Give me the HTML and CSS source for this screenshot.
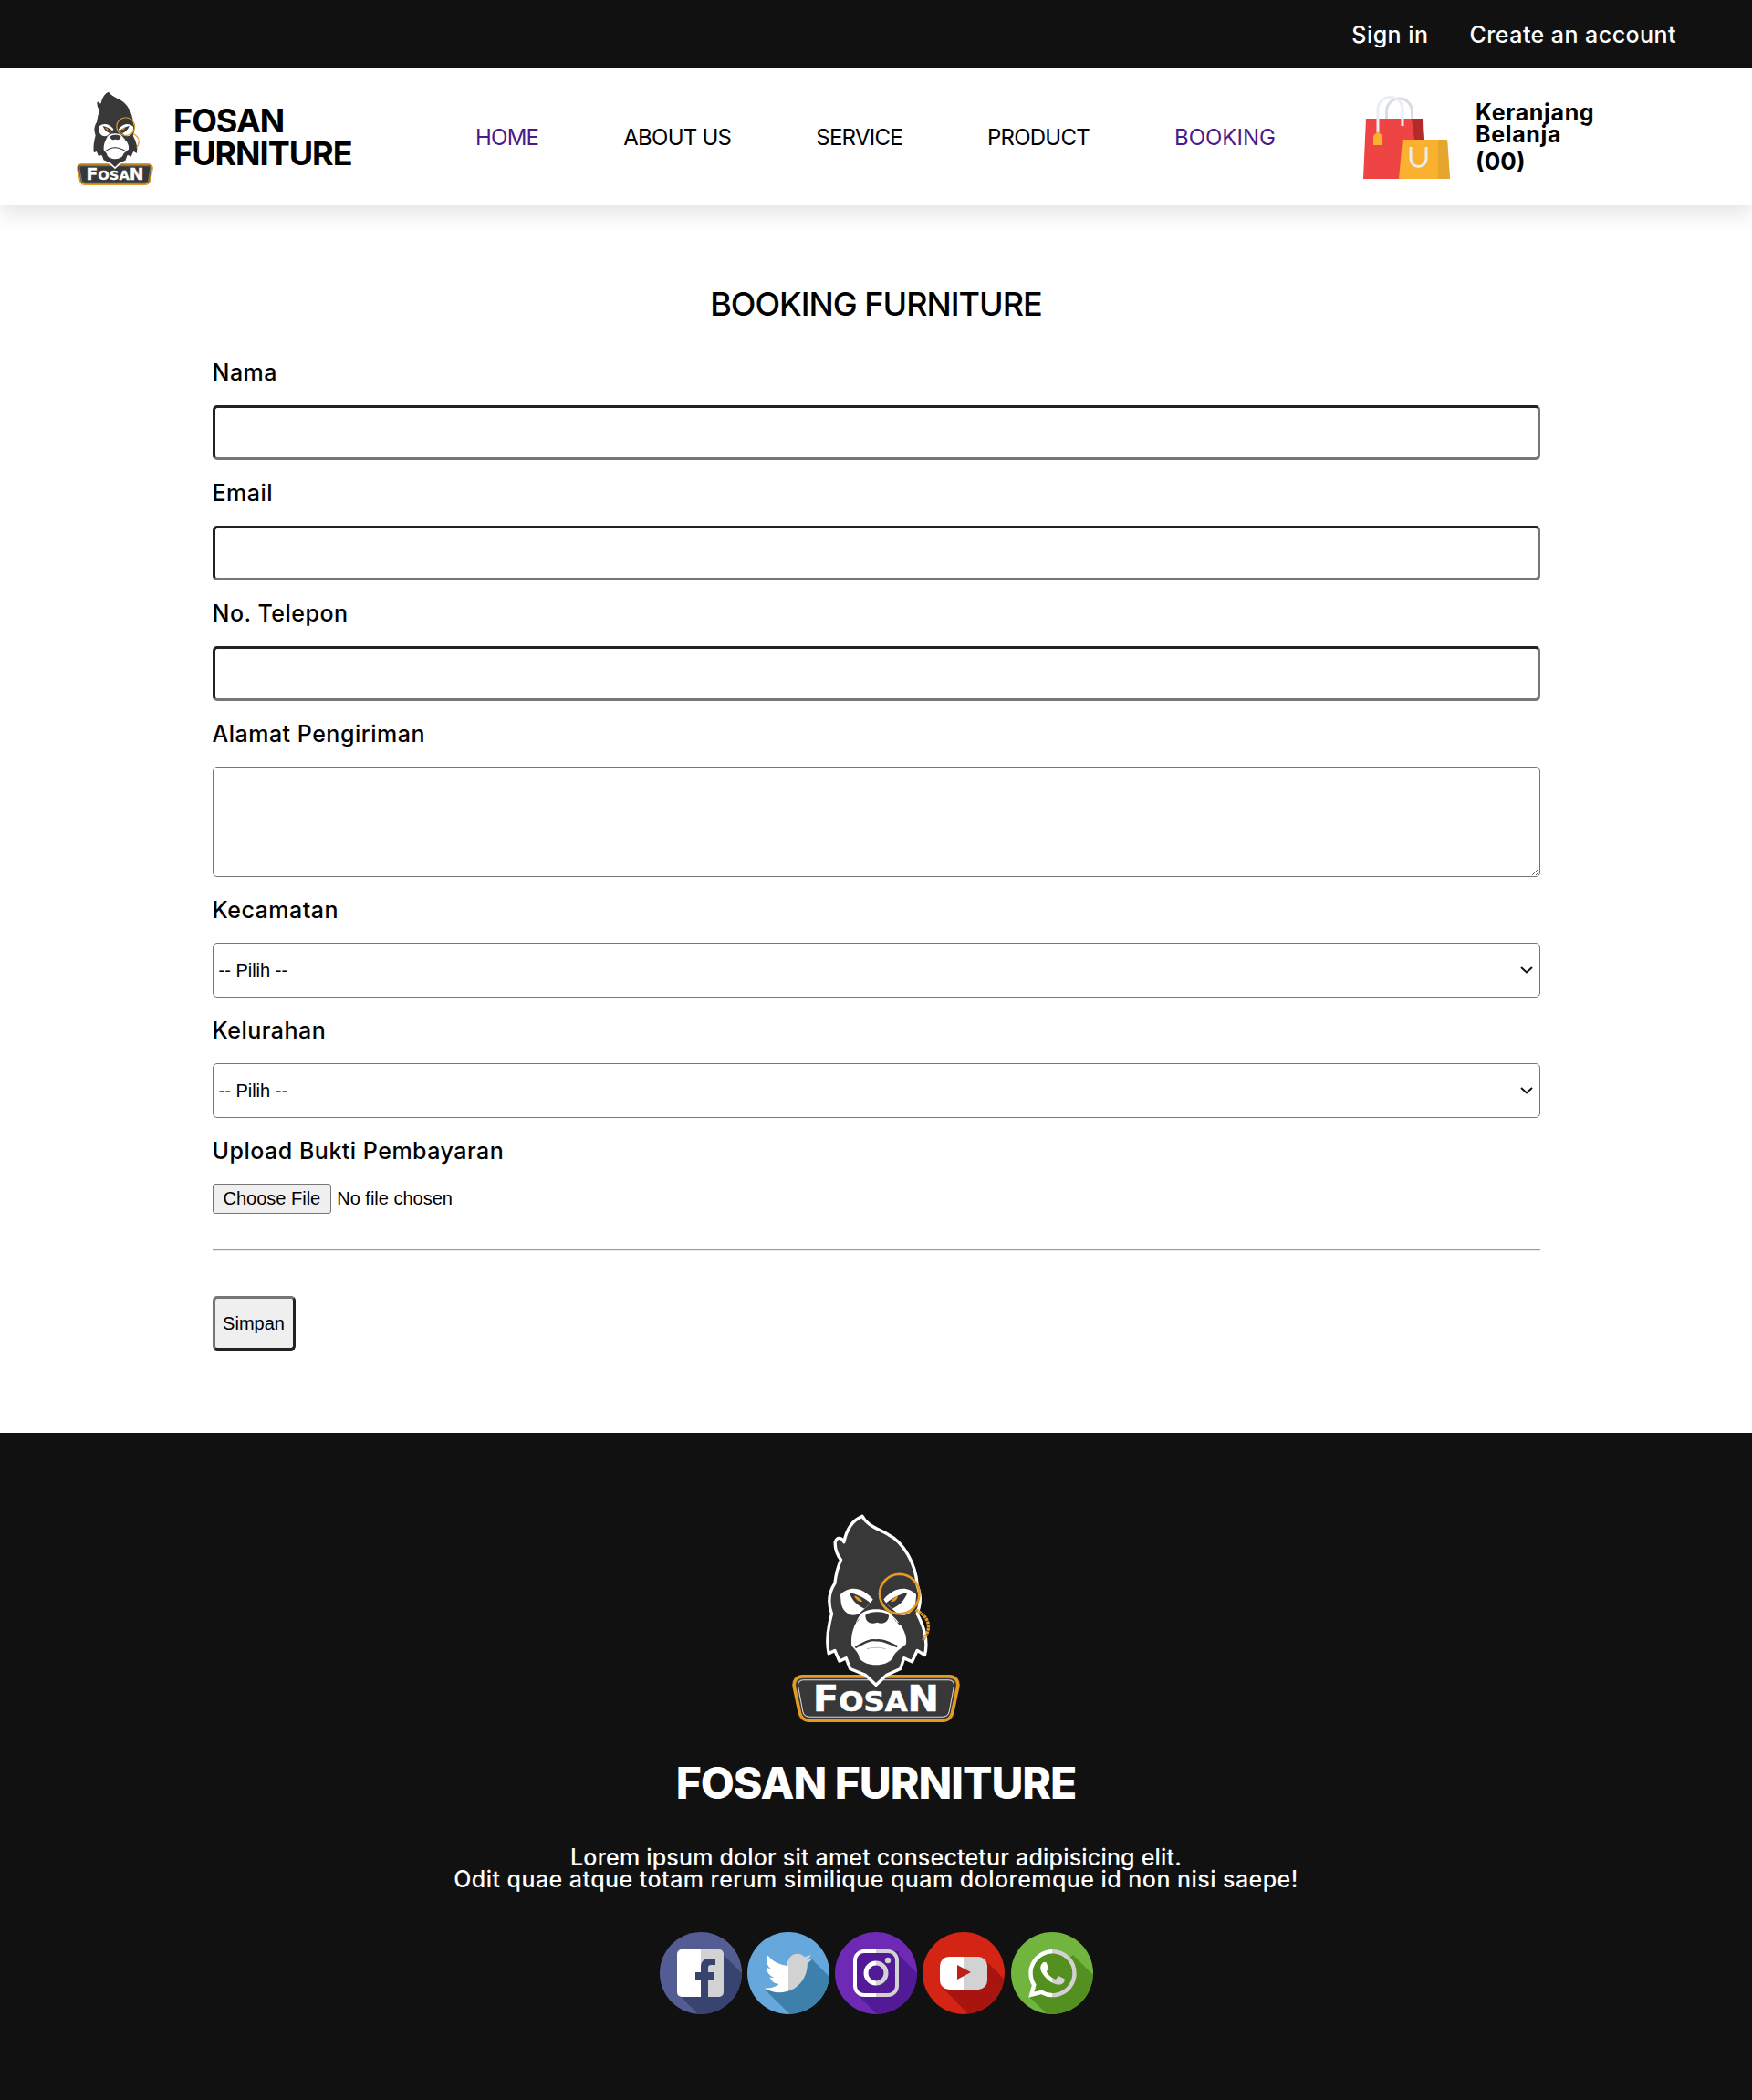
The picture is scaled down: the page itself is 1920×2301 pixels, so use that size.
FILE: index.html
```html
<!DOCTYPE html>
<html lang="id">
<head>
<meta charset="utf-8">
<title>Booking Furniture</title>
<link rel="stylesheet" href="styles.css">
</head>
<body>
<svg class="defs" width="0" height="0" aria-hidden="true">
  <defs>
    <linearGradient id="half" gradientUnits="userSpaceOnUse" x1="0" y1="0" x2="90" y2="0">
      <stop offset="0.5" stop-color="#fff"/><stop offset="0.5" stop-color="#d2d2d2"/>
    </linearGradient>
    <linearGradient id="halfBird" gradientUnits="userSpaceOnUse" x1="0" y1="0" x2="24" y2="0">
      <stop offset="0.5" stop-color="#fff"/><stop offset="0.5" stop-color="#d2d2d2"/>
    </linearGradient>
    <clipPath id="disc"><circle cx="45" cy="45" r="45"/></clipPath>
    <symbol id="gorilla" viewBox="85 55 550 685">
      <path d="M120 590H600C620 590 632 605 628 625L610 710C605 728 595 735 575 735H145C125 735 115 728 110 710L92 625C88 605 100 590 120 590Z" fill="#383838" stroke="#e59a22" stroke-width="11"/>
      <path d="M122 602H598C612 602 618 612 615 625L600 705C597 718 590 723 575 723H145C130 723 123 718 120 705L105 625C102 612 108 602 122 602Z" fill="none" stroke="#ddd" stroke-width="3"/>
      <text class="logo-word" x="154" y="705" textLength="412" lengthAdjust="spacingAndGlyphs">F<tspan class="logo-small">OSA</tspan>N</text>
      <path d="M315 65C290 75 265 100 255 150C248 135 232 130 226 150C225 175 235 195 245 208C235 230 228 260 225 285C205 315 200 345 215 385C205 420 195 470 205 515L225 505L240 540L262 530L275 565L325 585L360 618L395 585L440 565L452 530L478 542L495 505L520 520C530 480 525 440 495 385C510 340 505 320 495 290C490 220 450 150 400 125C365 105 330 95 315 65Z" fill="#383838" stroke="#fff" stroke-width="10" stroke-linejoin="round"/>
      <path d="M243 322C268 296 312 292 350 338C335 362 318 370 305 385C275 398 248 378 245 345Z" fill="#fff"/>
      <path d="M492 322C467 296 423 292 385 338C400 362 417 370 430 385C460 398 487 378 490 345Z" fill="#fff"/>
      <path d="M272 315C295 320 320 330 342 350L322 368C300 358 282 342 272 315Z" fill="#383838"/>
      <path d="M463 315C440 320 415 330 393 350L413 368C435 358 453 342 463 315Z" fill="#383838"/>
      <path d="M288 325C300 328 310 335 316 345C303 347 293 338 288 325Z M432 325C424 328 414 335 408 345C421 347 431 338 432 325Z" fill="#e59a22"/>
      <path d="M305 392C320 362 400 362 415 392C440 415 465 450 458 485C440 500 420 510 415 530C395 560 325 560 305 530C305 520 300 510 280 490C275 450 290 420 305 392Z" fill="#fff"/>
      <path d="M325 390C335 375 392 375 402 390C402 410 385 422 364 413C340 422 325 410 325 390Z" fill="#383838"/>
      <path d="M275 422L300 410L310 395L290 420Z M455 422L425 410L415 395L435 420Z" fill="#383838"/>
      <path d="M292 495C320 480 340 468 360 472C380 468 400 480 430 492" fill="none" stroke="#383838" stroke-width="7"/>
      <path d="M330 500C345 494 375 494 392 500" fill="none" stroke="#bbb" stroke-width="3"/>
      <circle cx="437" cy="320" r="65" fill="none" stroke="#e59a22" stroke-width="8"/>
      <path d="M490 372C535 395 545 430 514 472" fill="none" stroke="#e59a22" stroke-width="10" stroke-dasharray="9 2"/>
    </symbol>
  </defs>
</svg>

<div class="topbar">
  <a class="toplink" href="#">Sign in</a>
  <a class="toplink" href="#">Create an account</a>
</div>

<header class="header">
  <a class="brand" href="#">
    <svg class="brand-logo" width="84" height="105"><use href="#gorilla"/></svg>
    <span class="brand-name">FOSAN<br>FURNITURE</span>
  </a>
  <nav class="nav">
    <a class="nav-link nav-active" href="#">HOME</a>
    <a class="nav-link" href="#">ABOUT US</a>
    <a class="nav-link" href="#">SERVICE</a>
    <a class="nav-link" href="#">PRODUCT</a>
    <a class="nav-link nav-active nav-wide" href="#">BOOKING</a>
  </nav>
  <a class="cart" href="#">
    <svg class="cart-icon" width="95" height="91" viewBox="0 0 95 91">
      <path d="M25.500 26V17A14 14 0 0 1 53.500 17V27" fill="none" stroke="#dcdcdc" stroke-width="3"/>
      <path d="M3 25H66L68 91H0Z" fill="#ef4444"/>
      <path d="M53 25H65L67 48H56Z" fill="#b32a2a"/>
      <path d="M16 40V15A13.500 13.500 0 0 1 43 15V33" fill="none" stroke="#e8eef3" stroke-width="3"/>
      <path d="M16 39L21 44V54H11V44Z" fill="#f9b12f"/>
      <path d="M43 48H92L95 91H39Z" fill="#f9b12f"/>
      <path d="M82 48H92L95 91H82Z" fill="#e6a62e"/>
      <path d="M52 56V69A8.500 8.500 0 0 0 69 69V56" fill="none" stroke="#ececec" stroke-width="3"/>
    </svg>
    <span class="cart-text">
      <span class="cart-label">Keranjang<br>Belanja</span>
      <span class="cart-count">(00)</span>
    </span>
  </a>
</header>

<main class="main">
  <h1 class="page-title">BOOKING FURNITURE</h1>
  <form class="form">
    <div class="field"><label class="label">Nama</label><input class="text-input" type="text"></div>
    <div class="field"><label class="label">Email</label><input class="text-input" type="email"></div>
    <div class="field"><label class="label">No. Telepon</label><input class="text-input" type="text"></div>
    <div class="field"><label class="label">Alamat Pengiriman</label><textarea class="textarea"></textarea></div>
    <div class="field"><label class="label">Kecamatan</label><select class="select"><option>-- Pilih --</option></select></div>
    <div class="field"><label class="label">Kelurahan</label><select class="select"><option>-- Pilih --</option></select></div>
    <div class="field"><label class="label">Upload Bukti Pembayaran</label><input class="file" type="file"></div>
    <hr class="rule">
    <button class="submit" type="button">Simpan</button>
  </form>
</main>

<footer class="footer">
  <svg class="footer-logo" width="184" height="229"><use href="#gorilla"/></svg>
  <h2 class="footer-title">FOSAN FURNITURE</h2>
  <p class="footer-text"><span class="footer-line-first">Lorem ipsum dolor sit amet consectetur adipisicing elit.</span><br>Odit quae atque totam rerum similique quam doloremque id non nisi saepe!</p>
  <div class="socials">
    <svg class="social" width="90" height="90" viewBox="0 0 90 90"><g clip-path="url(#disc)">
      <rect width="90" height="90" fill="#535d93"/>
      <path d="M70 25L100 55V100H52L22 70Z" fill="#38436f"/>
      <rect x="19" y="19" width="51" height="52" rx="5" fill="url(#half)"/>
      <path d="M45 71V52H39V44H45V38C45 32 49 29 55 29H61V36H56C54 36 53 37 53 39V44H60L59 52H53V71Z" fill="#38436f"/>
    </g></svg>
    <svg class="social" width="90" height="90" viewBox="0 0 90 90"><g clip-path="url(#disc)">
      <rect width="90" height="90" fill="#67a8dc"/>
      <path d="M71 30L100 59V100H57L19 63L35 60L50 40L60 27Z" fill="#3d80ab"/>
      <path transform="translate(19 19) scale(2.170)" fill="url(#halfBird)" d="M23.954 4.569c-.885.389-1.83.654-2.825.775 1.014-.611 1.794-1.574 2.163-2.723-.951.555-2.005.959-3.127 1.184-.896-.959-2.173-1.559-3.591-1.559-2.717 0-4.92 2.203-4.92 4.917 0 .39.045.765.127 1.124C7.691 8.094 4.066 6.13 1.64 3.161c-.427.722-.666 1.561-.666 2.475 0 1.71.87 3.213 2.188 4.096-.807-.026-1.566-.248-2.228-.616v.061c0 2.385 1.693 4.374 3.946 4.827-.413.111-.849.171-1.296.171-.314 0-.615-.03-.916-.086.631 1.953 2.445 3.377 4.604 3.417-1.68 1.319-3.809 2.105-6.102 2.105-.39 0-.779-.023-1.17-.067 2.189 1.394 4.768 2.209 7.557 2.209 9.054 0 13.999-7.496 13.999-13.986 0-.209 0-.42-.015-.63.961-.689 1.8-1.56 2.46-2.548l-.047-.02z"/>
    </g></svg>
    <svg class="social" width="90" height="90" viewBox="0 0 90 90"><g clip-path="url(#disc)">
      <rect width="90" height="90" fill="#6f2ab5"/>
      <path d="M70 25L100 55V100H56L22 66V21H70Z" fill="#521a96"/>
      <rect x="22" y="21" width="46" height="48" rx="10" fill="none" stroke="url(#half)" stroke-width="4"/>
      <circle cx="45" cy="45" r="11" fill="none" stroke="url(#half)" stroke-width="5"/>
      <circle cx="58" cy="31" r="3.200" fill="#d2d2d2"/>
    </g></svg>
    <svg class="social" width="90" height="90" viewBox="0 0 90 90"><g clip-path="url(#disc)">
      <rect width="90" height="90" fill="#d32414"/>
      <path d="M70 32L100 62V100H60L21 60Z" fill="#a81511"/>
      <rect x="19" y="27" width="52" height="36" rx="10" fill="url(#half)"/>
      <path d="M38 36L53 44L38 52Z" fill="#c0201a"/>
    </g></svg>
    <svg class="social" width="90" height="90" viewBox="0 0 90 90"><g clip-path="url(#disc)">
      <rect width="90" height="90" fill="#71b43e"/>
      <path d="M68 25L100 57V100H50L19 70Z" fill="#539020"/>
      <circle cx="45" cy="45" r="24" fill="#539020"/>
      <path transform="translate(19 19) scale(2.200)" fill="url(#halfBird)" d="M17.472 14.382c-.297-.149-1.758-.867-2.03-.967-.273-.099-.471-.148-.67.15-.197.297-.767.966-.94 1.164-.173.199-.347.223-.644.075-.297-.15-1.255-.463-2.39-1.475-.883-.788-1.48-1.761-1.653-2.059-.173-.297-.018-.458.13-.606.134-.133.298-.347.446-.52.149-.174.198-.298.298-.497.099-.198.05-.371-.025-.52-.075-.149-.669-1.612-.916-2.207-.242-.579-.487-.5-.669-.51-.173-.008-.371-.01-.57-.01-.198 0-.52.074-.792.372-.272.297-1.04 1.016-1.04 2.479 0 1.462 1.065 2.875 1.213 3.074.149.198 2.096 3.2 5.077 4.487.709.306 1.262.489 1.694.625.712.227 1.36.195 1.871.118.571-.085 1.758-.719 2.006-1.413.248-.694.248-1.289.173-1.413-.074-.124-.272-.198-.57-.347m-5.421 7.403h-.004a9.87 9.87 0 01-5.031-1.378l-.361-.214-3.741.982.998-3.648-.235-.374a9.86 9.86 0 01-1.51-5.26c.001-5.45 4.436-9.884 9.888-9.884 2.64 0 5.122 1.03 6.988 2.898a9.825 9.825 0 012.893 6.994c-.003 5.45-4.437 9.884-9.885 9.884m8.413-18.297A11.815 11.815 0 0012.05 0C5.495 0 .16 5.335.157 11.892c0 2.096.547 4.142 1.588 5.945L.057 24l6.305-1.654a11.882 11.882 0 005.683 1.448h.005c6.554 0 11.89-5.335 11.893-11.893a11.821 11.821 0 00-3.48-8.413z"/>
    </g></svg>
  </div>
</footer>
</body>
</html>
```

FILE: styles.css
```css
* { box-sizing: border-box; }
html, body { margin: 0; padding: 0; }
body { font-family: "Inter", "Open Sans", sans-serif; color: #000; background: #fff; height: 2301px; display: flex; flex-direction: column; }
a { color: inherit; text-decoration: none; }
.defs { position: absolute; }

.topbar { height: 75px; background: #111; display: flex; justify-content: flex-end; align-items: center; gap: 45px; padding-right: 83px; }
.toplink { color: #fff; font-size: 25px; font-weight: 500; letter-spacing: .45px; }

.header { height: 150px; background: #fff; display: flex; align-items: center; padding-left: 84px; box-shadow: 0 8px 24px rgba(0, 0, 0, .12); }
.brand { display: flex; align-items: center; gap: 22px; width: 437px; }
.brand-logo { display: block; flex: none; margin-top: 1px; }
.brand-name { font-size: 36px; line-height: 36px; font-weight: 700; letter-spacing: -1px; }
.nav { display: flex; gap: 93px; width: 973px; }
.nav-link { font-size: 24px; font-weight: 400; letter-spacing: -.75px; }
.nav-active { color: #4b1a8a; }
.nav-wide { letter-spacing: 0; }
.cart { display: flex; align-items: center; gap: 28px; }
.cart-icon { display: block; flex: none; }
.cart-text { display: flex; flex-direction: column; margin-top: 5px; }
.cart-label { font-size: 25px; line-height: 24px; font-weight: 700; letter-spacing: .65px; }
.cart-count { font-size: 26px; line-height: 36px; font-weight: 700; }

.logo-word { font-family: "DejaVu Sans", sans-serif; font-weight: 700; font-size: 115px; fill: #fff; stroke: #fff; stroke-width: 2px; }
.logo-small { font-size: 90px; }

.main { width: 1455px; margin: 0 auto; flex: 1; }
.page-title { margin: 85px 0 0; font-size: 36px; line-height: 46px; font-weight: 500; text-align: center; letter-spacing: -1px; }
.form { display: flex; flex-direction: column; margin-top: 34px; }
.field { display: flex; flex-direction: column; gap: 18px; margin-bottom: 18px; align-items: flex-start; }
.label { font-size: 25px; line-height: 36px; font-weight: 500; letter-spacing: .5px; }
.text-input { width: 100%; height: 60px; background: #fff; border: 3px solid; border-color: #222 #767676 #767676 #222; border-radius: 5px; font-size: 20px; padding: 0 6px; }
.textarea { width: 100%; height: 121px; display: block; border: 1.5px solid #767676; border-radius: 5px; font-size: 20px; background: #fff; }
.select { width: 100%; height: 60px; border: 1.5px solid #767676; border-radius: 5px; appearance: none; background: #fff url("data:image/svg+xml,%3Csvg xmlns='http://www.w3.org/2000/svg' width='14' height='8' viewBox='0 0 14 8'%3E%3Cpath d='M1 1l6 5.500L13 1' fill='none' stroke='%23111' stroke-width='2'/%3E%3C/svg%3E") no-repeat right 7px center; font: 20px "Liberation Sans", Arial, sans-serif; color: #000; padding-left: 6px; }
.file { font: 20px "Liberation Sans", Arial, sans-serif; height: 33px; }
.file::file-selector-button { font: 20px "Liberation Sans", Arial, sans-serif; height: 33px; padding: 0 11px; margin-right: 6px; border: 1px solid #767676; border-radius: 3px; background: #efefef; color: #000; }
.rule { width: 100%; margin: 21px 0 49px; border: 0; border-top: 1px solid #9a9a9a; border-bottom: 1px solid #eee; height: 2px; }
.submit { align-self: flex-start; width: 91px; height: 60px; padding: 0; background: #efefef; border: 3px solid; border-color: #767676 #222 #222 #767676; border-radius: 5px; font: 20px "Liberation Sans", Arial, sans-serif; color: #000; }

.footer { height: 731px; background: #111; color: #fff; display: flex; flex-direction: column; align-items: center; padding-top: 88px; }
.footer-logo { display: block; }
.footer-title { margin: 31px 0 0; font-size: 48px; line-height: 72px; font-weight: 800; letter-spacing: -1px; }
.footer-text { margin: 33px 0 0; font-size: 25px; line-height: 24px; font-weight: 500; text-align: center; letter-spacing: .45px; }
.footer-line-first { letter-spacing: .19px; }
.socials { display: flex; gap: 6.25px; margin-top: 46px; }
.social { display: block; }
```
